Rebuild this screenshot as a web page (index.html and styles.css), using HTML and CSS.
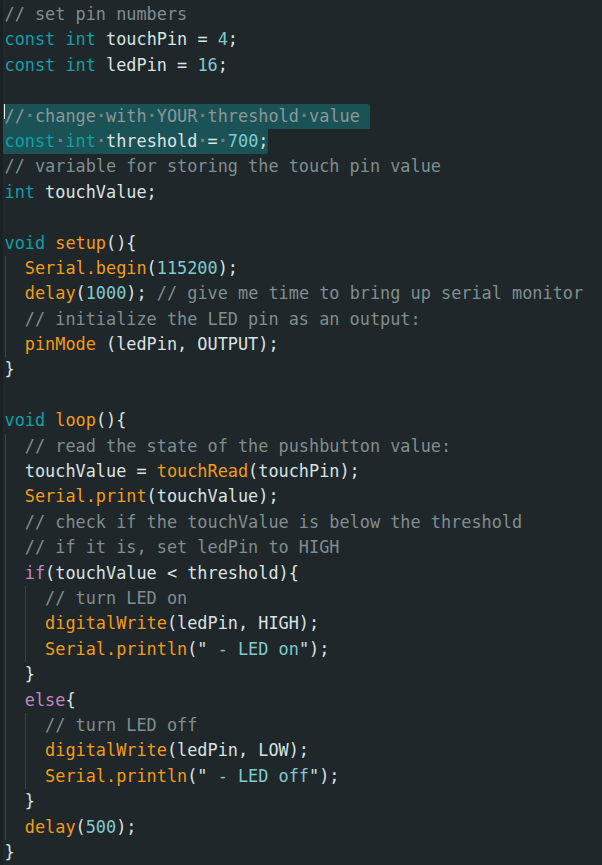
FILE: index.html
```html
<!DOCTYPE html>
<html>
<head>
<meta charset="utf-8">
<link rel="stylesheet" href="styles.css">
</head>
<body>
<div class="editor">
<div class="ln"><span class="c">// set pin numbers</span></div>
<div class="ln"><span class="k">const</span> <span class="k">int</span> touchPin = <span class="n">4</span>;</div>
<div class="ln"><span class="k">const</span> <span class="k">int</span> ledPin = <span class="n">16</span>;</div>
<div class="ln"> </div>
<div class="ln"><span class="sel sel-a"><span class="cursor"></span><span class="c">//<span class="w">·</span>change<span class="w">·</span>with<span class="w">·</span>YOUR<span class="w">·</span>threshold<span class="w">·</span>value</span> </span></div>
<div class="ln"><span class="sel sel-b"><span class="k">const</span><span class="w">·</span><span class="k">int</span><span class="w">·</span>threshold<span class="w">·</span>=<span class="w">·</span><span class="n">700</span>;</span></div>
<div class="ln"><span class="c">// variable for storing the touch pin value</span></div>
<div class="ln"><span class="k">int</span> touchValue;</div>
<div class="ln"> </div>
<div class="ln"><span class="k">void</span> <span class="f">setup</span>(){</div>
<div class="ln"><span class="i">  </span><span class="f">Serial.begin</span>(<span class="n">115200</span>);</div>
<div class="ln"><span class="i">  </span><span class="f">delay</span>(<span class="n">1000</span>); <span class="c">// give me time to bring up serial monitor</span></div>
<div class="ln"><span class="i">  </span><span class="c">// initialize the LED pin as an output:</span></div>
<div class="ln"><span class="i">  </span><span class="f">pinMode</span> (ledPin, OUTPUT);</div>
<div class="ln">}</div>
<div class="ln"> </div>
<div class="ln"><span class="k">void</span> <span class="f">loop</span>(){</div>
<div class="ln"><span class="i">  </span><span class="c">// read the state of the pushbutton value:</span></div>
<div class="ln"><span class="i">  </span>touchValue = <span class="f">touchRead</span>(touchPin);</div>
<div class="ln"><span class="i">  </span><span class="f">Serial.print</span>(touchValue);</div>
<div class="ln"><span class="i">  </span><span class="c">// check if the touchValue is below the threshold</span></div>
<div class="ln"><span class="i">  </span><span class="c">// if it is, set ledPin to HIGH</span></div>
<div class="ln"><span class="i">  </span><span class="p">if</span>(touchValue &lt; threshold){</div>
<div class="ln"><span class="i">  </span><span class="i">  </span><span class="c">// turn LED on</span></div>
<div class="ln"><span class="i">  </span><span class="i">  </span><span class="f">digitalWrite</span>(ledPin, HIGH);</div>
<div class="ln"><span class="i">  </span><span class="i">  </span><span class="f">Serial.println</span>("<span class="n"> - LED on</span>");</div>
<div class="ln"><span class="i">  </span>}</div>
<div class="ln"><span class="i">  </span><span class="p">else</span>{</div>
<div class="ln"><span class="i">  </span><span class="i">  </span><span class="c">// turn LED off</span></div>
<div class="ln"><span class="i">  </span><span class="i">  </span><span class="f">digitalWrite</span>(ledPin, LOW);</div>
<div class="ln"><span class="i">  </span><span class="i">  </span><span class="f">Serial.println</span>("<span class="n"> - LED off</span>");</div>
<div class="ln"><span class="i">  </span>}</div>
<div class="ln"><span class="i">  </span><span class="f">delay</span>(<span class="n">500</span>);</div>
<div class="ln">}</div>
</div>
</body>
</html>
```
FILE: styles.css
```css
html, body {
  margin: 0;
  padding: 0;
  background: #1f272a;
  height: 100%;
  overflow: hidden;
}
.editor {
  box-sizing: border-box;
  height: 865px;
  padding: 2px 0 0 4.5px;
  font-family: "DejaVu Sans Mono", monospace;
  font-size: 16.87px;
  line-height: 25.4px;
  color: #dae3e3;
  position: relative;
  background: linear-gradient(to right, #1a2124 0, #1a2124 3px, #1f272a 3px);
}
.ln {
  height: 25.4px;
  white-space: pre;
}
.c { color: #808e8f; }
.k { color: #0ca1a6; }
.f { color: #f39c12; }
.n { color: #7fcbcd; }
.p { color: #c586c0; }
.w { color: #718284; font-weight: bold; }
.i {
  display: inline-block;
  width: 2ch;
  height: 25.4px;
  vertical-align: top;
  box-shadow: inset 1px 0 0 #3a4347;
}
.sel {
  display: inline-block;
  height: 25.4px;
  vertical-align: top;
  background: #1b5255;
  position: relative;
}
.sel-a {
  margin-left: -1.5px;
  padding-left: 1.5px;
  border-radius: 0 3px 0 0;
}
.sel-b {
  margin-left: -1.5px;
  padding-left: 1.5px;
  border-radius: 0 0 3px 0;
}
.sel-a .c { color: #8a9899; }
.cursor {
  position: absolute;
  left: 0.5px;
  top: 0;
  width: 1.5px;
  height: 15px;
  background: #e8eeee;
}
```
